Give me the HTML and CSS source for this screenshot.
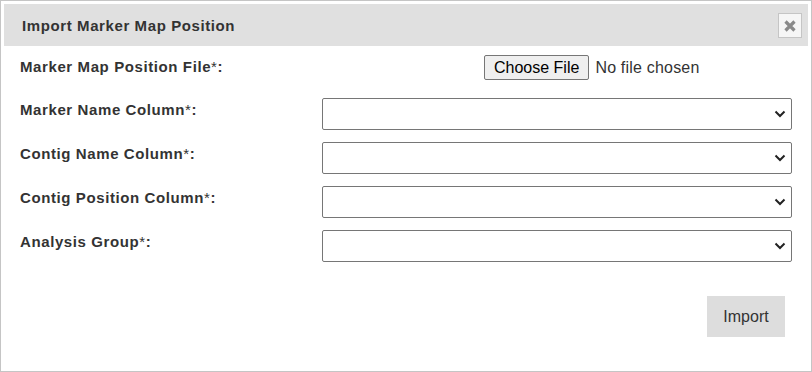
FILE: index.html
```html
<!DOCTYPE html>
<html>
<head>
<meta charset="utf-8">
<link rel="stylesheet" href="styles.css">
</head>
<body>
<div class="dialog">
  <div class="header">
    <span class="title">Import Marker Map Position</span>
    <button class="close" type="button" aria-label="Close">
      <svg width="12" height="12" viewBox="0 0 12 12"><path d="M1.5 1.5 L10.5 10.5 M10.5 1.5 L1.5 10.5" stroke="#8a8a8a" stroke-width="3.2" stroke-linecap="butt"/></svg>
    </button>
  </div>
  <div class="form">
    <label class="lbl">Marker Map Position File<span class="ast">*</span>:</label>
    <div class="file-cell"><input type="file" class="file"></div>
    <label class="lbl">Marker Name Column<span class="ast">*</span>:</label>
    <div class="sel-wrap"><select class="sel"><option></option></select><svg class="chev" width="12" height="8" viewBox="0 0 12 8"><path d="M1.5 1.5 L6 6 L10.5 1.5" fill="none" stroke="#222" stroke-width="2"/></svg></div>
    <label class="lbl">Contig Name Column<span class="ast">*</span>:</label>
    <div class="sel-wrap"><select class="sel"><option></option></select><svg class="chev" width="12" height="8" viewBox="0 0 12 8"><path d="M1.5 1.5 L6 6 L10.5 1.5" fill="none" stroke="#222" stroke-width="2"/></svg></div>
    <label class="lbl">Contig Position Column<span class="ast">*</span>:</label>
    <div class="sel-wrap"><select class="sel"><option></option></select><svg class="chev" width="12" height="8" viewBox="0 0 12 8"><path d="M1.5 1.5 L6 6 L10.5 1.5" fill="none" stroke="#222" stroke-width="2"/></svg></div>
    <label class="lbl">Analysis Group<span class="ast">*</span>:</label>
    <div class="sel-wrap"><select class="sel"><option></option></select><svg class="chev" width="12" height="8" viewBox="0 0 12 8"><path d="M1.5 1.5 L6 6 L10.5 1.5" fill="none" stroke="#222" stroke-width="2"/></svg></div>
  </div>
  <div class="footer">
    <button class="import" type="button">Import</button>
  </div>
</div>
</body>
</html>
```
FILE: styles.css
```css
html, body {
  margin: 0;
  padding: 0;
  background: #fff;
}
.dialog {
  width: 812px;
  height: 372px;
  box-sizing: border-box;
  border: 1px solid #c5c5c5;
  padding: 3px;
  font-family: "Liberation Sans", Arial, sans-serif;
  color: #333;
  display: flex;
  flex-direction: column;
}
.header {
  height: 42px;
  background: #e0e0e0;
  display: flex;
  align-items: center;
  justify-content: space-between;
  padding: 0 6px 0 18px;
  box-sizing: border-box;
}
.title {
  font-weight: bold;
  font-size: 15px;
  letter-spacing: 0.6px;
  color: #333;
}
.close {
  width: 24px;
  height: 25px;
  box-sizing: border-box;
  border: 1px solid #c5c5c5;
  background: #f6f6f6;
  padding: 0;
  margin-top: 1px;
  display: flex;
  align-items: center;
  justify-content: center;
}
.close svg { display: block; }
.form {
  display: grid;
  grid-template-columns: 302px 470px;
  row-gap: 12px;
  padding: 9px 16px 0 16px;
  align-items: start;
}
.lbl {
  font-weight: bold;
  font-size: 15px;
  line-height: 17px;
  letter-spacing: 0.6px;
  padding-top: 3px;
  color: #333;
}
.ast { font-weight: normal; }
.file-cell {
  height: 25px;
  padding-left: 162px;
  margin-bottom: 6px;
}
.file {
  font-family: "Liberation Sans", Arial, sans-serif;
  font-size: 16px;
  letter-spacing: 0.2px;
  color: #333;
}
.file::file-selector-button {
  font-family: "Liberation Sans", Arial, sans-serif;
  font-size: 16px;
  letter-spacing: 0;
  height: 25px;
  padding: 0 9px;
  margin-right: 6px;
  border: 1px solid #767676;
  border-radius: 2px;
  background: #efefef;
  color: #000;
}
.sel-wrap {
  position: relative;
  width: 470px;
  height: 32px;
}
.sel {
  -webkit-appearance: none;
  appearance: none;
  display: block;
  width: 470px;
  height: 32px;
  box-sizing: border-box;
  border: 1px solid #767676;
  border-radius: 2px;
  background: #fff;
  font-size: 14px;
}
.chev {
  position: absolute;
  right: 6px;
  top: 12px;
  pointer-events: none;
}
.footer {
  display: flex;
  justify-content: flex-end;
  padding: 34px 23px 0 0;
}
.import {
  width: 78px;
  height: 41px;
  border: none;
  background: #dddddd;
  color: #333;
  font-family: "Liberation Sans", Arial, sans-serif;
  font-size: 16px;
  padding: 0;
}
```
